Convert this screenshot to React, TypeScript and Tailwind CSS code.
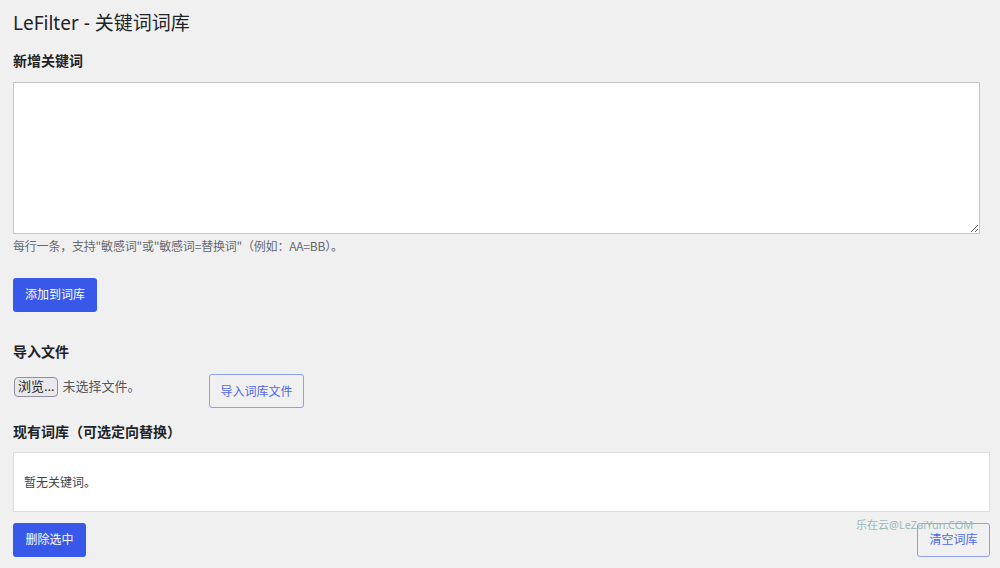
import React from 'react';

const font = { fontFamily: '"Noto Sans", "Noto Sans CJK SC", sans-serif' };
const cjkFirst = { fontFamily: '"Noto Sans CJK SC", "Noto Sans", sans-serif' };

export default function App() {
    return (
        <div className="relative min-h-screen bg-[#f0f0f1] pl-[13px] pr-[10px] pt-[9px] text-[#1d2327]" style={font}>
            <h1 className="text-[19px] leading-[28px] font-normal">LeFilter - 关键词词库</h1>

            {/* Add keywords */}
            <h2 className="mt-[14px] text-[14px] leading-[20px] font-semibold">新增关键词</h2>
            <textarea className="mt-[11px] block w-[967px] h-[152px] bg-white border border-[#c3c4c7] rounded-[1px] resize-y" />
            <p className="mt-[3px] text-[12px] leading-[18px] text-[#646970] tracking-[-0.2px]" style={cjkFirst}>
                每行一条，支持"敏感词"或"敏感词=替换词"（例如：AA=BB）。
            </p>
            <button className="mt-[23px] h-[34px] w-[84px] rounded-[3px] bg-[#3858e9] text-white text-[12px]">
                添加到词库
            </button>

            {/* Import */}
            <h2 className="mt-[30px] text-[14px] leading-[20px] font-semibold">导入文件</h2>
            <div className="mt-[12px] flex items-start">
                <div className="w-[196px] flex items-center pt-[3px]">
                    <span className="ml-[1px] h-[20px] px-[3px] flex items-center border border-[#8f8f9d] rounded-[4px] bg-[#e9e9ed] text-[13px] text-[#1d2327]">
                        浏览...
                    </span>
                    <span className="ml-[4px] text-[13px] text-[#50575e]">未选择文件。</span>
                </div>
                <button className="h-[34px] w-[95px] rounded-[3px] border border-[#8c9ff0] bg-[#f0f0f1] text-[#4f68ea] text-[12px] pt-[2px]">
                    导入词库文件
                </button>
            </div>

            {/* Existing list */}
            <h2 className="mt-[14px] text-[14px] leading-[20px] font-semibold">现有词库（可选定向替换）</h2>
            <div className="mt-[10px] h-[60px] w-[977px] bg-white border border-[#dcdcde] flex items-center px-[10px] pt-[2px]">
                <span className="text-[12px] text-[#3c434a]">暂无关键词。</span>
            </div>
            <div className="mt-[11px] w-[977px] flex justify-between">
                <button className="h-[34px] w-[73px] rounded-[3px] bg-[#3858e9] text-white text-[12px]">删除选中</button>
                <button className="h-[34px] w-[73px] rounded-[3px] border border-[#8c9ff0] bg-[#f0f0f1] text-[#4f68ea] text-[12px]">
                    清空词库
                </button>
            </div>

            <span className="absolute left-[856px] top-[518px] text-[11px] leading-[14px] text-[#9bbab8]">
                乐在云@LeZaiYun.COM
            </span>
        </div>
    );
}
